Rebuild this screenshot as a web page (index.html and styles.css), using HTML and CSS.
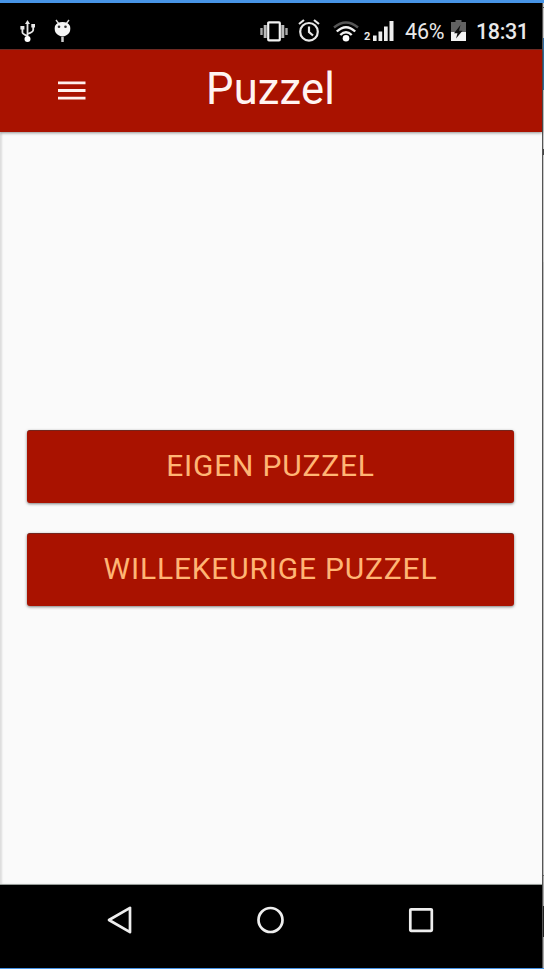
FILE: index.html
```html
<!DOCTYPE html>
<html lang="nl">
<head>
<meta charset="utf-8">
<title>Puzzel</title>
<link rel="stylesheet" href="styles.css">
</head>
<body>
<div class="window">
  <div class="phone">
    <div class="status">
      <svg class="icon usb" width="16" height="23" viewBox="0 0 16 23" fill="none" stroke="#e8e8e8" stroke-width="1.8">
        <path d="M7.5 3V19M2.4 8v4.2q0 1.800 5.100 3.800M13.200 6v4q0 2-5.700 4"/>
        <path d="M7.500 0 10 4H5zM.4 6h4v3.500h-4zM11.300 4H15v3.500h-3.700z" fill="#e8e8e8" stroke="none"/>
        <circle cx="7.500" cy="19" r="3" fill="#fff" stroke="none"/>
      </svg>
      <svg class="icon debug" width="17" height="24" viewBox="0 0 17 24">
        <path d="M2 1l3 4M15 1l-3 4" stroke="#ddd" stroke-width="1.400"/>
        <path d="M1 7Q3 3 8.500 3T16 7Q17.500 14 12 16.500Q8.500 18.500 5 16.500Q-.5 14 1 7z" fill="#f5f5f5"/>
        <circle cx="5" cy="7.800" r="1.300" fill="#333"/><circle cx="11.500" cy="7.800" r="1.300" fill="#333"/>
        <path d="M8.500 18V23" stroke="#ccc" stroke-width="2.500"/>
      </svg>
      <span class="spacer"></span>
      <svg class="icon vibrate" width="28" height="21" viewBox="0 0 28 21" fill="none">
        <rect x="8.200" y="1.300" width="11.600" height="18" rx=".8" stroke="#f2f2f2" stroke-width="2.200"/>
        <path d="M5.200 4v13M22.800 4v13" stroke="#bbb" stroke-width="3"/>
        <path d="M1.500 7v7M26.500 7v7" stroke="#aaa" stroke-width="2.400"/>
      </svg>
      <svg class="icon alarm" width="22" height="23" viewBox="0 0 22 23" fill="none" stroke="#e8e8e8" stroke-width="2.200">
        <circle cx="11" cy="12.800" r="8.800"/>
        <path d="M1 5 6 1M16 1l5 4M11 7.500V13l4 3.500"/>
      </svg>
      <svg class="icon wifi" width="26" height="22" viewBox="0 0 26 22" fill="none" stroke-width="2.400">
        <path d="M1 6.500Q13-3.500 25 6.500" stroke="#555"/>
        <path d="M3.800 10.500Q13 1.800 22.200 10.500M7.300 14Q13 8.500 18.700 14" stroke="#f2f2f2"/>
        <circle cx="13" cy="17.300" r="3.300" fill="#fff"/>
      </svg>
      <span class="sim">2</span>
      <svg class="icon signal" width="21" height="21" viewBox="0 0 21 21" fill="#eee">
        <path d="M0 14.500h3.600V20H0zM5.500 10.500h3.700V20H5.500zM11 5.500h3.700V20H11zM16.500 0h4v20h-4z"/>
      </svg>
      <span class="percent">46%</span>
      <svg class="icon battery" width="15" height="22" viewBox="0 0 15 22">
        <path d="M4.500 0h6v2H15v10H0V2h4.500z" fill="#626262"/>
        <path d="M0 12h15v9H0z" fill="#f4f4f4"/>
        <path d="M9.500 5 3 13.300h3.500L5 18.500l6.500-7.800H8z" fill="#111"/>
      </svg>
      <time class="clock">18:31</time>
    </div>
    <header class="appbar">
      <svg class="menu" width="28" height="20" viewBox="0 0 28 20">
        <path d="M0 1.800h27.500M0 9.500h27.500M0 17.200h27.500" stroke="#fff0ed" stroke-width="2.800"/>
      </svg>
      <h1 class="title">Puzzel</h1>
    </header>
    <main class="content">
      <button class="action own">Eigen puzzel</button>
      <button class="action random">Willekeurige puzzel</button>
    </main>
    <nav class="navbar">
      <svg width="28" height="30" viewBox="0 0 28 30"><path d="M3 15 24 2.800V27.200z" fill="none" stroke="#eee" stroke-width="2.700" stroke-linejoin="round"/></svg>
      <svg width="28" height="30" viewBox="0 0 28 30"><circle cx="13.500" cy="15" r="12" fill="none" stroke="#eee" stroke-width="2.700"/></svg>
      <svg width="28" height="30" viewBox="0 0 28 30"><rect x="3.300" y="4.300" width="21.500" height="21.500" rx=".8" fill="none" stroke="#eee" stroke-width="2.700"/></svg>
    </nav>
  </div>
  <div class="edge"></div>
</div>
</body>
</html>
```

FILE: styles.css
```css
* { box-sizing: border-box; }
body { margin: 0; font-family: Roboto, sans-serif; }
.window {
  display: flex;
  width: 544px;
  height: 969px;
  border-top: 3px solid #4794e6;
  border-bottom: 1px solid #4794e6;
  background: #000;
}
.phone { display: flex; flex-direction: column; width: 542px; }
.edge {
  width: 2px;
  border-left: 1px solid #555;
  background: linear-gradient(#c8c8c8 0 4px, #555 4px 5px, #c8c8c8 5px 35px, #356fa5 35px 87px, #c8c8c8 87px 146px, #444 146px 152px, #c8c8c8 152px 259px, #bbb 259px 872px, #666 872px 873px, #aaa 873px 903px, #222 903px 934px, #aaa 934px);
}
.status {
  display: flex;
  align-items: flex-start;
  height: 46px;
  padding: 17px 14px 0 20px;
  background: #000;
  color: #e9e9e9;
}
.icon { flex: none; }
.debug { margin: -1px 0 0 18px; }
.spacer { flex: 1; }
.vibrate { margin-top: 1px; }
.alarm { margin: -1px 0 0 10px; }
.wifi { margin: 1px 0 0 13px; }
.sim { width: 7px; margin: 11px 2px 0 5px; font-size: 11px; font-weight: 700; line-height: 12px; }
.signal { margin-top: 1px; }
.percent { width: 40px; margin: 0 6px 0 11px; font-size: 21.500px; line-height: 24px; letter-spacing: -.2px; white-space: nowrap; }
.clock { width: 52px; margin-left: 10px; font-size: 21.500px; font-weight: 500; line-height: 24px; letter-spacing: -.4px; white-space: nowrap; }
.appbar {
  display: flex;
  align-items: center;
  height: 83px;
  padding-left: 58px;
  border-top: 1px solid #6d2922;
  background: #a91200;
  box-shadow: 0 1px 3px rgba(0, 0, 0, .4);
  z-index: 1;
}
.menu { flex: none; }
.title { margin: 0 0 2px 120px; color: #fff4f2; font-size: 43.500px; font-weight: 400; line-height: 50px; letter-spacing: .2px; }
.content {
  display: flex;
  flex: 1;
  flex-direction: column;
  justify-content: center;
  gap: 30px;
  padding: 20px 28px 0 27px;
  border-bottom: 1px solid #969c98;
  background: #fafafa;
  box-shadow: inset 2px 0 2px #ddd;
}
.action {
  height: 73px;
  padding: 0 0 2px;
  border: 0;
  border-top: 1px solid #74251d;
  border-radius: 3px;
  background: #a91200;
  box-shadow: 0 1px 3px rgba(0, 0, 0, .5);
  color: #ffb574;
  font: 400 30px/36px Roboto, sans-serif;
  letter-spacing: .8px;
  text-transform: uppercase;
}
.navbar {
  display: flex;
  justify-content: space-between;
  height: 83px;
  padding: 20px 107px 0 106px;
  background: #000;
}
```
